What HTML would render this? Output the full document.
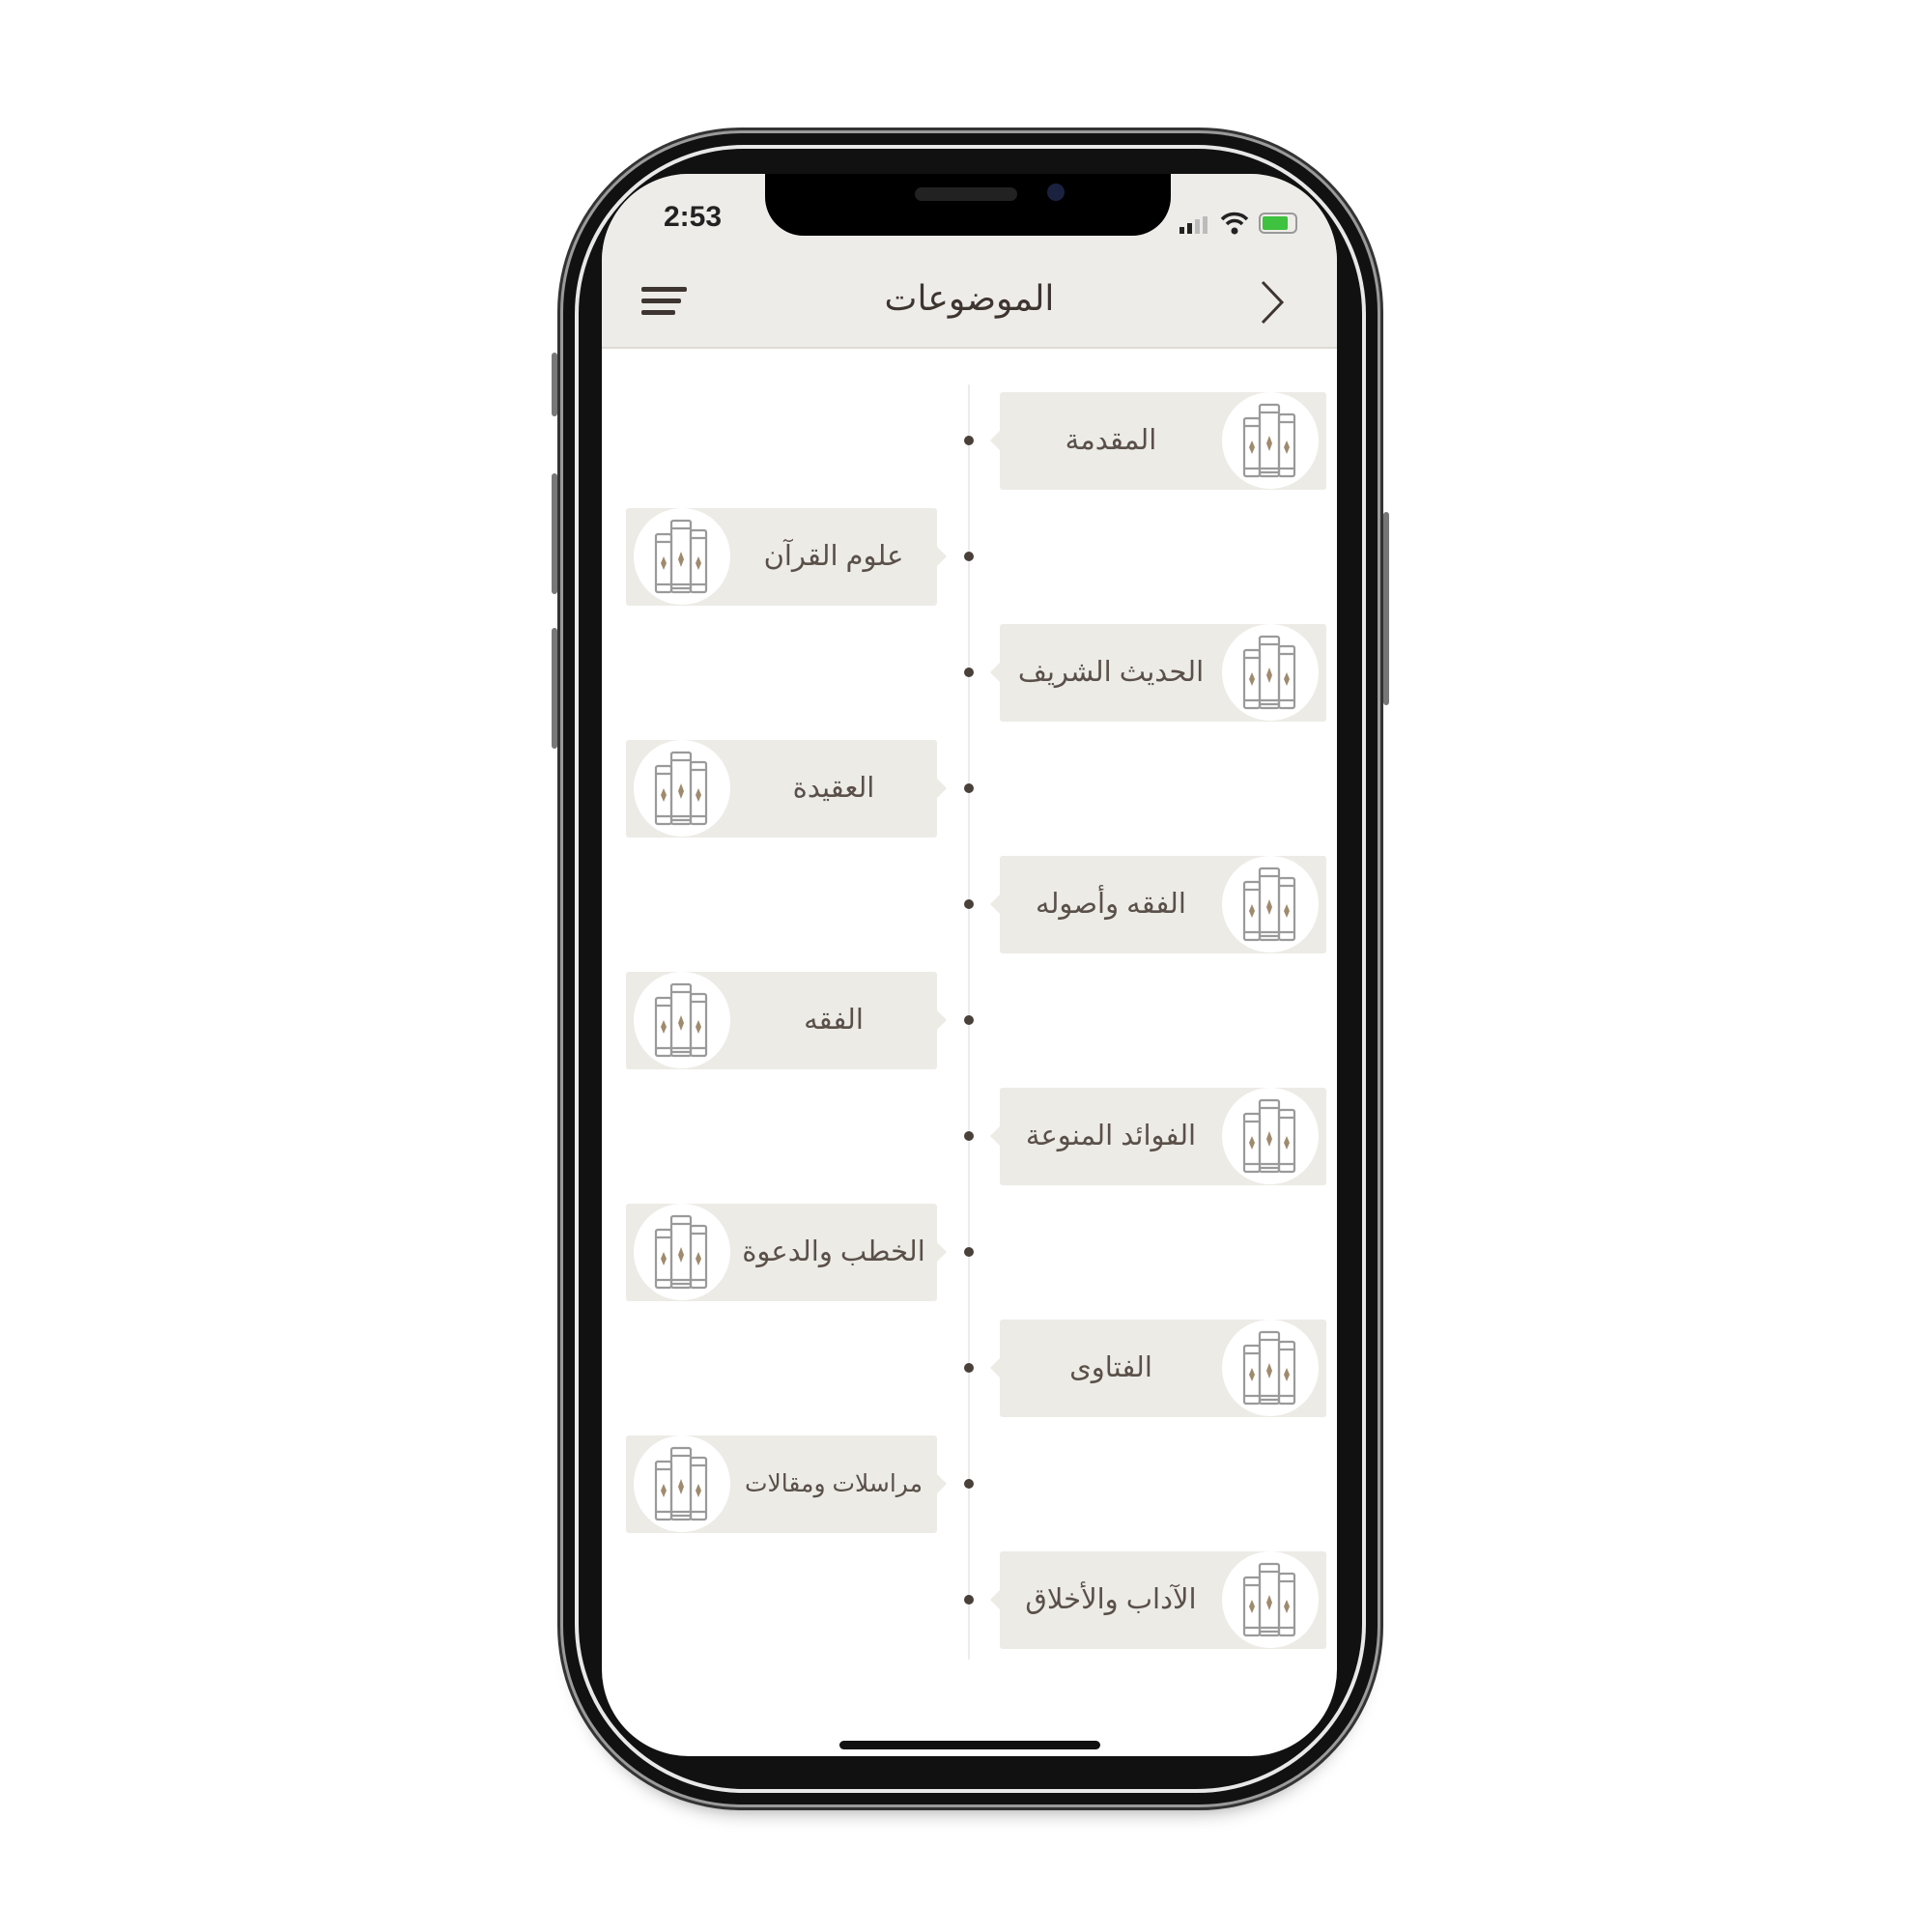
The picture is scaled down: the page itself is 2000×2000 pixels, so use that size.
<!DOCTYPE html>
<html><head><meta charset="utf-8"><style>
body{margin:0;width:2000px;height:2000px;background:#fff;position:relative;overflow:hidden;font-family:"Liberation Sans","DejaVu Sans",sans-serif}
.abs{position:absolute}
.phone{left:583px;top:138px;width:843px;height:1730px;border-radius:185px;background:#111;box-shadow:0 0 0 3px #9a9a9a,0 0 0 6px #333, 0 18px 20px -12px rgba(0,0,0,.4)}
.ring{left:595px;top:150px;width:819px;height:1706px;border-radius:175px;border:4px solid #e8e8e8;box-sizing:border-box}
.screen{left:623px;top:180px;width:761px;height:1638px;border-radius:90px;background:#fff;overflow:hidden}
.header{left:0;top:0;width:761px;height:179px;background:#eeece8;border-bottom:2px solid #dedbd5}
.notch{left:169px;top:0;width:420px;height:64px;background:#000;border-radius:0 0 40px 40px;z-index:5}
.card{position:absolute;height:101px;background:#ecebe6;border-radius:3px}
.circ{position:absolute;width:100px;height:100px;border-radius:50%;background:#fff;top:0}
.txt{position:absolute;top:0;height:101px;line-height:101px;text-align:center;font-size:29px;color:#5a5049;font-family:"Liberation Sans","DejaVu Sans",sans-serif}
.dot{position:absolute;width:10px;height:10px;border-radius:50%;background:#4a403a;left:375px}
.ptr{position:absolute;width:0;height:0;border-top:10px solid transparent;border-bottom:10px solid transparent}
</style></head><body>
<div class="abs phone"></div>
<div class="abs ring"></div>
<div class="abs" style="left:571px;top:365px;width:6px;height:66px;background:#777;border-radius:3px"></div>
<div class="abs" style="left:571px;top:490px;width:6px;height:125px;background:#777;border-radius:3px"></div>
<div class="abs" style="left:571px;top:650px;width:6px;height:125px;background:#777;border-radius:3px"></div>
<div class="abs" style="left:1432px;top:530px;width:6px;height:200px;background:#777;border-radius:3px"></div>
<div class="abs screen">
  <div class="abs header"></div>
  <div class="abs notch">
    <div class="abs" style="left:155px;top:14px;width:106px;height:14px;border-radius:7px;background:#222"></div>
    <div class="abs" style="left:292px;top:10px;width:18px;height:18px;border-radius:50%;background:#1a2240"></div>
  </div>
  <div class="abs" style="left:64px;top:28px;font-size:30px;font-weight:bold;color:#222">2:53</div>
  <div class="abs" style="left:598px;top:44px;width:32px;height:18px">
    <div class="abs" style="left:0;top:11px;width:5px;height:7px;background:#222"></div>
    <div class="abs" style="left:8px;top:7px;width:5px;height:11px;background:#222"></div>
    <div class="abs" style="left:16px;top:3px;width:5px;height:15px;background:#bbb"></div>
    <div class="abs" style="left:24px;top:0;width:5px;height:18px;background:#bbb"></div>
  </div>
  <svg class="abs" style="left:640px;top:38px" width="30" height="26" viewBox="0 0 30 26"><path d="M2 9 A18 18 0 0 1 28 9" stroke="#222" stroke-width="3.5" fill="none"/><path d="M7 14 A11 11 0 0 1 23 14" stroke="#222" stroke-width="3.5" fill="none"/><circle cx="15" cy="21" r="3.5" fill="#222"/></svg>
  <div class="abs" style="left:680px;top:40px;width:40px;height:22px;border:2px solid #999;border-radius:6px;box-sizing:border-box"><div style="margin:2px;width:26px;height:14px;background:#3fc23f;border-radius:2px"></div></div>
  <div class="abs" style="left:41px;top:117px;width:47px;height:5px;background:#3e3530;border-radius:2px"></div>
  <div class="abs" style="left:41px;top:129px;width:41px;height:5px;background:#3e3530;border-radius:2px"></div>
  <div class="abs" style="left:41px;top:141px;width:35px;height:5px;background:#3e3530;border-radius:2px"></div>
  <div class="abs" style="left:0;top:108px;width:761px;text-align:center;font-size:36px;color:#3e3530">الموضوعات</div>
  <svg class="abs" style="left:680px;top:108px" width="30" height="50" viewBox="0 0 30 50"><path d="M4 4 L24 25 L4 46" stroke="#3e3530" stroke-width="3" fill="none"/></svg>
  <div class="abs" style="left:379px;top:218px;width:2px;height:1320px;background:#eeeceb"></div>
  <div id="rows"></div>
</div>
<script>
(function(){
var names=["المقدمة","علوم القرآن","الحديث الشريف","العقيدة","الفقه وأصوله","الفقه","الفوائد المنوعة","الخطب والدعوة","الفتاوى","مراسلات ومقالات","الآداب والأخلاق"];
var book='<svg width="70" height="90" viewBox="0 0 70 90" style="position:absolute;left:15px;top:5px"><g fill="none" stroke="#9a9a9a" stroke-width="2.2"><rect x="8" y="22" width="16" height="60" rx="2"/><rect x="24" y="8" width="20" height="74" rx="2"/><rect x="44" y="18" width="16" height="64" rx="2"/><path d="M8 30h16M8 74h16M24 16h20M24 74h20M24 78h20M44 26h16M44 74h16"/></g><g fill="#a08a6e"><path d="M16 45l3 7-3 7-3-7z"/><path d="M34 40l3 8-3 8-3-8z"/><path d="M52 45l3 7-3 7-3-7z"/></g></svg>';
var h="";
for(var i=0;i<11;i++){var cy=276+i*120;var tp=cy-50;
 if(i%2==0){h+='<div class="card" style="left:412px;top:'+tp+'px;width:338px"><div class="circ" style="left:230px">'+book+'</div><div class="txt" style="left:0;width:230px">'+names[i]+'</div></div><div class="ptr" style="left:402px;top:'+(cy-10)+'px;border-right:10px solid #ecebe6"></div>';}
 else{h+='<div class="card" style="left:25px;top:'+tp+'px;width:322px"><div class="circ" style="left:8px">'+book+'</div><div class="txt" style="left:108px;width:214px;font-size:'+(i==9?25:29)+'px">'+names[i]+'</div></div><div class="ptr" style="left:347px;top:'+(cy-10)+'px;border-left:10px solid #ecebe6"></div>';}
 h+='<div class="dot" style="top:'+(cy-5)+'px"></div>';}
document.getElementById("rows").innerHTML=h;
})();
</script>
<div class="abs" style="left:869px;top:1802px;width:270px;height:9px;border-radius:5px;background:#111"></div>
</body></html>
